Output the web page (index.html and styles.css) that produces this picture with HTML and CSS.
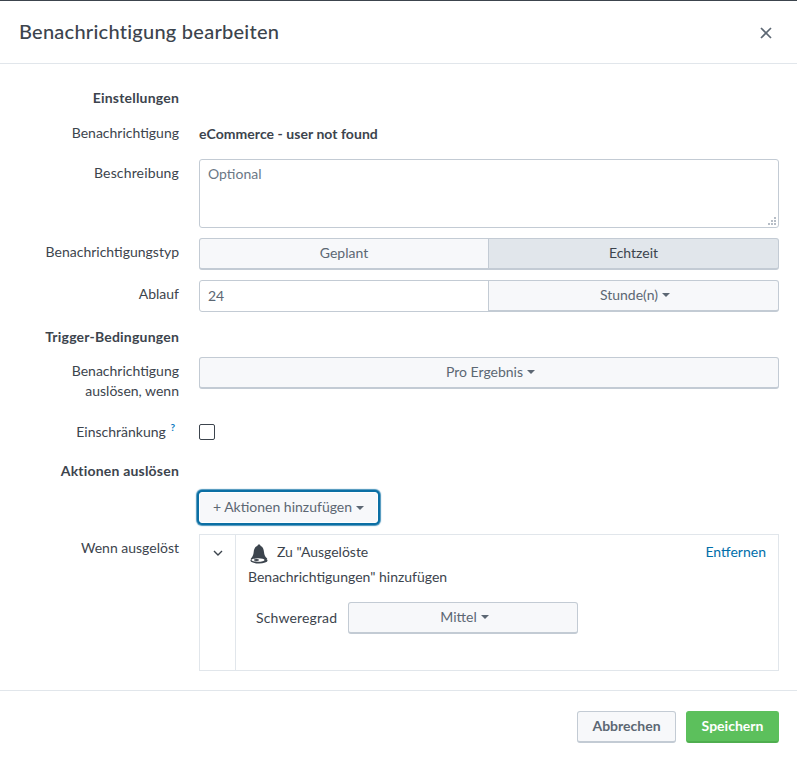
FILE: index.html
```html
<!DOCTYPE html>
<html lang="de">
<head>
<meta charset="utf-8">
<title>Benachrichtigung bearbeiten</title>
<link rel="stylesheet" href="styles.css">
</head>
<body>
<div class="dialog">
  <header class="head">
    <h1 class="title">Benachrichtigung bearbeiten</h1>
    <svg class="close" width="12" height="12" viewBox="0 0 12 12"><path d="M1 1l10 10M11 1L1 11" stroke="#5c6773" stroke-width="1.7" fill="none"/></svg>
  </header>
  <main class="body">
    <div class="row r-sec1"><div class="label strong">Einstellungen</div></div>
    <div class="row r-name"><div class="label">Benachrichtigung</div><div class="value">eCommerce - user not found</div></div>
    <div class="row r-desc">
      <div class="label lab-desc">Beschreibung</div>
      <div class="textarea"><span class="placeholder">Optional</span>
        <svg class="grip" width="9" height="9" viewBox="0 0 9 9"><path d="M7 1h2v2H7zM4 4h2v2H4zM7 4h2v2H7zM1 7h2v2H1zM4 7h2v2H4zM7 7h2v2H7z" fill="#b6bdc6"/></svg>
      </div>
    </div>
    <div class="row r-type">
      <div class="label lab-type">Benachrichtigungstyp</div>
      <div class="group">
        <div class="btn seg seg-l">Geplant</div>
        <div class="btn seg seg-r active">Echtzeit</div>
      </div>
    </div>
    <div class="row r-exp">
      <div class="label lab-exp">Ablauf</div>
      <div class="group">
        <div class="input seg-l">24</div>
        <div class="btn seg seg-r has-caret">Stunde(n)<i class="caret"></i></div>
      </div>
    </div>
    <div class="row r-sec2"><div class="label strong">Trigger-Bedingungen</div></div>
    <div class="row r-when">
      <div class="label lab-two">Benachrichtigung<br>auslösen, wenn</div>
      <div class="btn wide has-caret">Pro Ergebnis<i class="caret"></i></div>
    </div>
    <div class="row r-lim">
      <div class="label lab-lim">Einschränkung <sup class="help">?</sup></div>
      <div class="check"></div>
    </div>
    <div class="row r-sec3"><div class="label strong">Aktionen auslösen</div></div>
    <div class="row r-add">
      <div class="label"></div>
      <div class="btn add">+ Aktionen hinzufügen<i class="caret"></i></div>
    </div>
    <div class="row r-act">
      <div class="label lab-act">Wenn ausgelöst</div>
      <div class="panel">
        <div class="toggle">
          <svg width="10" height="6" viewBox="0 0 10 6"><path d="M1 1l4 4 4-4" stroke="#3c444d" stroke-width="1.4" fill="none"/></svg>
        </div>
        <div class="content">
          <div class="act-top">
            <div class="act-title">
              <svg class="bell" width="20" height="20" viewBox="0 0 20 20"><path d="M10 0.5c-1 0-1.6.7-1.6 1.600C5.800 2.900 5 5.200 4.700 8c-.3 3-1 4.600-2.600 6.200-.6.7-.4 1.300.4 1.300h15c.8 0 1-.6.4-1.300C15.900 12.600 15.300 11 15 8c-.3-2.800-1.100-5.100-3.400-5.900 0-.9-.6-1.600-1.600-1.600z" fill="#3c444d"/><ellipse cx="10" cy="16.500" rx="8.600" ry="3" fill="#3c444d"/><ellipse cx="9" cy="16" rx="6.500" ry="1.700" fill="#fff"/><ellipse cx="7.500" cy="16" rx="2.500" ry="1.100" fill="#3c444d"/></svg>
              <span>Zu "Ausgelöste</span>
            </div>
            <a class="link">Entfernen</a>
          </div>
          <div class="act-line">Benachrichtigungen" hinzufügen</div>
          <div class="act-sev">
            <span class="sev-label">Schweregrad</span>
            <div class="btn sev has-caret">Mittel<i class="caret"></i></div>
          </div>
        </div>
      </div>
    </div>
  </main>
  <footer class="foot">
    <div class="btn cancel">Abbrechen</div>
    <div class="btn save">Speichern</div>
  </footer>
</div>
</body>
</html>
```
FILE: styles.css
```css
* { box-sizing: border-box; }
html, body { margin: 0; padding: 0; background: #fff; }
body { font-family: Lato, "Open Sans", sans-serif; font-size: 14px; color: #3c444d; }
.dialog { width: 797px; height: 763px; border-top: 1px solid #3c444d; display: flex; flex-direction: column; }
.head { height: 63px; border-bottom: 1px solid #e1e6eb; display: flex; align-items: center; justify-content: space-between; padding: 0 25px 0 19px; flex: none; }
.title { margin: 0 0 2px; font-size: 20px; font-weight: 500; color: #3c444d; letter-spacing: .25px; }
.close { display: block; margin-top: 2px; }
.body { height: 626px; flex: none; padding: 0 18px 0 0; }
.row { display: flex; align-items: center; }
.label { width: 179px; flex: none; text-align: right; line-height: 20px; margin-right: 20px; color: #3c444d; }
.strong { font-weight: 700; letter-spacing: .2px; }
.r-sec1 { height: 20px; margin-top: 24px; }
.r-name { height: 20px; margin-top: 16px; }
.r-name .label, .r-name .value { margin-bottom: 2px; }
.r-desc { align-items: flex-start; margin-top: 15px; height: 69px; }
.lab-desc { margin-top: 4px; letter-spacing: .15px; }
.lab-type { margin-bottom: 4px; }
.lab-exp { margin-bottom: 4px; }
.r-type { margin-top: 10px; height: 32px; }
.r-exp { margin-top: 10px; height: 32px; }
.r-sec2 { margin-top: 15px; height: 20px; }
.r-when { margin-top: 10px; align-items: flex-start; height: 50px; }
.lab-two { margin-top: 4px; line-height: 20px; }
.r-lim { margin-top: 17px; height: 16px; }
.lab-lim { padding-right: 4px; margin-bottom: 1px; }
.r-sec3 { margin-top: 21px; height: 20px; }
.r-add { margin-top: 11px; height: 31px; }
.r-act { margin-top: 11px; align-items: flex-start; height: 137px; }
.lab-act { margin-top: 4px; }
.value { font-weight: 700; color: #3c444d; letter-spacing: .05px; }
.textarea { flex: 1; height: 69px; border: 1px solid #c3cbd4; border-radius: 3px; padding: 5px 8px; position: relative; background: #fff; }
.placeholder { color: #6b7785; }
.grip { position: absolute; right: 2px; bottom: 2px; }
.group { display: flex; flex: 1; height: 32px; }
.btn { display: flex; align-items: center; justify-content: center; background: #f7f8fa; border: 1px solid #c3cbd4; border-bottom-width: 2px; border-radius: 3px; color: #5c6773; padding-bottom: 3px; }
.has-caret { padding-left: 3px; }
.seg { height: 32px; }
.seg-l { width: 290px; border-radius: 3px 0 0 3px; }
.seg-r { flex: 1; margin-left: -1px; border-radius: 0 3px 3px 0; }
.btn.active { background: #e1e6eb; color: #3c444d; }
.input { height: 32px; border: 1px solid #c3cbd4; padding: 0 8px 2px; display: flex; align-items: center; color: #5c6773; background: #fff; }
.caret { display: inline-block; width: 0; height: 0; border-left: 4px solid transparent; border-right: 4px solid transparent; border-top: 4px solid #5c6773; margin-left: 4px; margin-top: 2px; }
.wide { flex: 1; height: 32px; }
.help { font-size: 10px; font-weight: 700; color: #0a7abf; line-height: 0; margin-left: 1px; }
.check { width: 16px; height: 16px; border: 1px solid #3c444d; border-radius: 2px; background: #fff; }
.add { width: 179px; height: 31px; box-shadow: 0 0 0 2px #0b6fa4, 0 0 1px 3px rgba(11,111,164,.75); border-color: #fff; border-bottom-width: 1px; border-radius: 3px; padding-bottom: 2px; }
.panel { flex: 1; height: 137px; border: 1px solid #e1e6eb; display: flex; }
.toggle { width: 36px; flex: none; border-right: 1px solid #e1e6eb; display: flex; justify-content: center; align-items: flex-start; padding-top: 15px; }
.content { flex: 1; padding: 0 12px; }
.act-top { display: flex; justify-content: space-between; align-items: center; height: 35px; padding-bottom: 1px; }
.act-title { display: flex; align-items: center; gap: 8px; padding-left: 1px; }
.bell { display: block; margin-top: 4px; }
.act-title span { margin-top: -2px; }
.link { color: #006eaa; margin-top: -2px; }
.act-line { line-height: 20px; margin-top: -3px; }
.act-sev { display: flex; align-items: center; margin-top: 15px; padding-left: 8px; }
.sev-label { width: 92px; flex: none; margin-bottom: 2px; letter-spacing: .15px; }
.sev { width: 230px; height: 32px; }
.foot { height: 73px; flex: none; border-top: 1px solid #e1e6eb; display: flex; justify-content: flex-end; align-items: flex-start; gap: 10px; padding: 20px 18px 0 0; }
.cancel { width: 99px; height: 32px; font-weight: 700; }
.save { width: 93px; height: 32px; font-weight: 700; color: #fff; background: #5cc05c; border-color: #5cc05c #5cc05c #4fae4f; }
```
